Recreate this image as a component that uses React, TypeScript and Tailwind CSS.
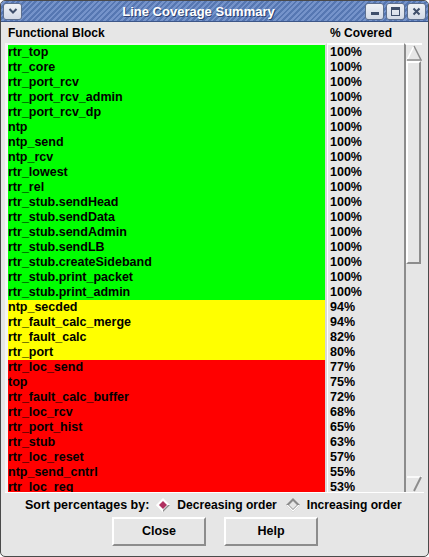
import React from 'react';

type Row = { name: string; pct: number };

const rows: Row[] = [
  { name: 'rtr_top', pct: 100 },
  { name: 'rtr_core', pct: 100 },
  { name: 'rtr_port_rcv', pct: 100 },
  { name: 'rtr_port_rcv_admin', pct: 100 },
  { name: 'rtr_port_rcv_dp', pct: 100 },
  { name: 'ntp', pct: 100 },
  { name: 'ntp_send', pct: 100 },
  { name: 'ntp_rcv', pct: 100 },
  { name: 'rtr_lowest', pct: 100 },
  { name: 'rtr_rel', pct: 100 },
  { name: 'rtr_stub.sendHead', pct: 100 },
  { name: 'rtr_stub.sendData', pct: 100 },
  { name: 'rtr_stub.sendAdmin', pct: 100 },
  { name: 'rtr_stub.sendLB', pct: 100 },
  { name: 'rtr_stub.createSideband', pct: 100 },
  { name: 'rtr_stub.print_packet', pct: 100 },
  { name: 'rtr_stub.print_admin', pct: 100 },
  { name: 'ntp_secded', pct: 94 },
  { name: 'rtr_fault_calc_merge', pct: 94 },
  { name: 'rtr_fault_calc', pct: 82 },
  { name: 'rtr_port', pct: 80 },
  { name: 'rtr_loc_send', pct: 77 },
  { name: 'top', pct: 75 },
  { name: 'rtr_fault_calc_buffer', pct: 72 },
  { name: 'rtr_loc_rcv', pct: 68 },
  { name: 'rtr_port_hist', pct: 65 },
  { name: 'rtr_stub', pct: 63 },
  { name: 'rtr_loc_reset', pct: 57 },
  { name: 'ntp_send_cntrl', pct: 55 },
  { name: 'rtr_loc_req', pct: 53 },
];

function rowColor(p: number) {
  if (p >= 95) return 'bg-[#00ff00]';
  if (p >= 80) return 'bg-[#ffff00]';
  return 'bg-[#ff0000]';
}

function TitleButton({ children }: { children: React.ReactNode }) {
  return (
    <div className="w-[19px] h-[17px] rounded-[3px] border border-[#5d6f8e] bg-[linear-gradient(#eef1f6,#d3dae6)] flex items-center justify-center">
      {children}
    </div>
  );
}

function Diamond({ on }: { on: boolean }) {
  return (
    <svg width="14" height="14" viewBox="0 0 14 14">
      <polygon points="7,0 14,7 7,14 0,7" fill={on ? '#ffffff' : '#8a8a8a'} />
      <polygon points="7,14 14,7 12,7 7,12" fill={on ? '#8a8a8a' : '#ffffff'} />
      <polygon points="7,14 0,7 2,7 7,12" fill="#ffffff" />
      <polygon points="7,3 11,7 7,11 3,7" fill={on ? '#b03060' : '#e6e6e6'} />
    </svg>
  );
}

function Button({ label }: { label: string }) {
  return (
    <div className="w-[94px] h-[29px] border-2 border-t-white border-l-white border-b-[#8c8c8c] border-r-[#8c8c8c] flex items-center justify-center text-[12.5px]">
      {label}
    </div>
  );
}

export default function App() {
  return (
    <div className="w-[429px] h-[557px] bg-[#e6e6e6] border border-[#4a4a4a] rounded-[5px] flex flex-col overflow-hidden font-['Liberation_Sans',Arial,sans-serif] font-bold text-[12px] text-black">
      {/* title bar */}
      <div className="h-[21px] flex items-center px-[2px] gap-[2px] bg-[repeating-linear-gradient(135deg,#5677b2_0px,#5677b2_2px,#7593ca_2px,#7593ca_4px)] border-b border-[#3c5688]">
        <TitleButton>
          <svg width="10" height="8" viewBox="0 0 10 8">
            <polyline points="1.5,2 5,5.5 8.5,2" fill="none" stroke="#3f4f6b" strokeWidth="2" />
          </svg>
        </TitleButton>
        <div className="flex-1 text-center text-white text-[13px] leading-none pl-[10px] [text-shadow:1px_1px_0_#2d4374]">
          Line Coverage Summary
        </div>
        <TitleButton>
          <div className="w-[8px] h-[3px] bg-[#3f4f6b] mt-[5px]" />
        </TitleButton>
        <TitleButton>
          <div className="w-[9px] h-[9px] border border-[#3f4f6b] border-t-[3px]" />
        </TitleButton>
        <TitleButton>
          <svg width="9" height="9" viewBox="0 0 9 9">
            <path d="M1.5 1.5 L7.5 7.5 M7.5 1.5 L1.5 7.5" stroke="#3f4f6b" strokeWidth="2" />
          </svg>
        </TitleButton>
      </div>

      {/* header */}
      <div className="h-[21px] flex items-center">
        <div className="w-[328px] pl-[7px]">Functional Block</div>
        <div className="pl-[1px]">% Covered</div>
      </div>

      {/* list */}
      <div className="h-[450px] mx-[4px] flex border-b border-white text-[12.5px]">
        <div className="w-[322px] border-l-[3px] border-t-2 border-r-2 border-l-[#f4f4f4] border-t-[#f4f4f4] border-r-[#d8d8d8] overflow-hidden">
          {rows.map((r) => (
            <div key={r.name} className={`h-[15px] leading-[15px] ${rowColor(r.pct)}`}>
              {r.name}
            </div>
          ))}
        </div>
        <div className="w-[77px] border-l border-t-2 border-white overflow-hidden pl-[2px]">
          {rows.map((r) => (
            <div key={r.name} className="h-[15px] leading-[15px]">
              {r.pct}%
            </div>
          ))}
        </div>
        <div className="w-[18px] border-l-2 border-[#8c8c8c] flex flex-col border-t-2 border-t-white">
          <svg width="16" height="16" viewBox="0 0 16 16">
            <polygon points="8,1 15,15 1,15" fill="#e6e6e6" />
            <polyline points="1,15 8,1" stroke="#ffffff" strokeWidth="1.5" fill="none" />
            <polyline points="8,1 15,15 1,15" stroke="#8c8c8c" strokeWidth="1.5" fill="none" />
          </svg>
          <div className="h-[203px] border-2 border-t-white border-l-white border-r-[#8c8c8c] border-b-[#8c8c8c] mr-[1px]" />
          <div className="flex-1" />
          <svg width="16" height="16" viewBox="0 0 16 16">
            <polygon points="1,1 15,1 8,15" fill="#e6e6e6" />
            <polyline points="1,1 15,1 8,15" stroke="#ffffff" strokeWidth="1.5" fill="none" />
            <polyline points="15,1 8,15" stroke="#8c8c8c" strokeWidth="2" fill="none" />
          </svg>
        </div>
      </div>

      {/* sort */}
      <div className="h-[24px] flex items-center pl-[24px] gap-[7px] text-[12.5px]">
        <span>Sort percentages by:</span>
        <Diamond on />
        <span className="mr-[2px] text-[12.1px]">Decreasing order</span>
        <Diamond on={false} />
        <span className="text-[12.1px]">Increasing order</span>
      </div>

      {/* buttons */}
      <div className="flex justify-center gap-[18px] pl-[1px]">
        <Button label="Close" />
        <Button label="Help" />
      </div>
    </div>
  );
}
